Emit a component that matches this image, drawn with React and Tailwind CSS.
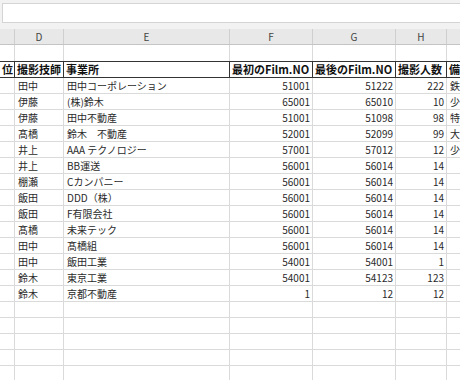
import React from 'react';

const cols = [
  { key: 'c', letter: '', w: 'w-[15px]' },
  { key: 'd', letter: 'D', w: 'w-[49px]' },
  { key: 'e', letter: 'E', w: 'w-[166px]' },
  { key: 'f', letter: 'F', w: 'w-[83px]' },
  { key: 'g', letter: 'G', w: 'w-[83px]' },
  { key: 'h', letter: 'H', w: 'w-[51px]' },
  { key: 'i', letter: '', w: 'w-[60px]' },
];

const rows = [
  ['田中', '田中コーポレーション', '51001', '51222', '222', '鉄道関係'],
  ['伊藤', '(株)鈴木', '65001', '65010', '10', '少年団'],
  ['伊藤', '田中不動産', '51001', '51098', '98', '特別'],
  ['髙橋', '鈴木　不動産', '52001', '52099', '99', '大会'],
  ['井上', 'AAA テクノロジー', '57001', '57012', '12', '少年団'],
  ['井上', 'BB運送', '56001', '56014', '14', ''],
  ['棚瀬', 'Cカンパニー', '56001', '56014', '14', ''],
  ['飯田', 'DDD（株）', '56001', '56014', '14', ''],
  ['飯田', 'F有限会社', '56001', '56014', '14', ''],
  ['髙橋', '未来テック', '56001', '56014', '14', ''],
  ['田中', '髙橋組', '56001', '56014', '14', ''],
  ['田中', '飯田工業', '54001', '54001', '1', ''],
  ['鈴木', '東京工業', '54001', '54123', '123', ''],
  ['鈴木', '京都不動産', '1', '12', '12', ''],
];

const headers = ['位', '撮影技師', '事業所', '最初のFilm.NO', '最後のFilm.NO', '撮影人数', '備考'];

const font = { fontFamily: '"Noto Sans CJK JP", "Noto Sans", sans-serif' };

const DataRow = ({ cells }) => (
  <div className="flex h-[16px] shrink-0">
    {cols.map((c, i) => {
      const v = cells ? (i === 0 ? '' : cells[i - 1]) : '';
      const num = i >= 3 && i <= 5;
      return (
        <div
          key={c.key}
          className={`${c.w} shrink-0 border-r border-b border-[#dadada] overflow-hidden whitespace-nowrap text-[10px] leading-[15px] text-[#2a2a2a] ${num ? 'text-right pr-[2px]' : 'pl-[3px]'}`}
        >
          {v}
        </div>
      );
    })}
  </div>
);

export default function App() {
  return (
    <div className="w-[460px] h-[380px] overflow-hidden bg-white flex flex-col" style={font}>
      {/* formula bar */}
      <div className="h-[29px] shrink-0 bg-[#f2f2f2] pt-[3px] pl-[2px]">
        <div className="h-[20px] bg-white border border-[#d4d4d4] border-r-0" />
      </div>

      {/* column letters */}
      <div className="flex h-[16px] shrink-0 bg-[#e8e8e8] border-b border-[#c4c4c4]">
        {cols.map((c) => (
          <div
            key={c.key}
            className={`${c.w} shrink-0 border-r border-[#cfcfcf] text-center text-[10px] leading-[15px] text-[#444]`}
          >
            {c.letter}
          </div>
        ))}
      </div>

      {/* empty row above header */}
      <div className="flex h-[16px] shrink-0">
        {cols.map((c) => (
          <div key={c.key} className={`${c.w} shrink-0 border-r border-[#dadada]`} />
        ))}
      </div>

      {/* header row */}
      <div className="flex h-[17px] shrink-0 border-t border-b border-[#333]">
        {cols.map((c, i) => (
          <div
            key={c.key}
            className={`${c.w} shrink-0 border-r border-[#333] overflow-hidden whitespace-nowrap font-bold text-[11px] leading-[15px] text-[#111] ${i === 0 ? 'text-right pr-[1px]' : 'pl-[2px]'}`}
          >
            {headers[i]}
          </div>
        ))}
      </div>

      {rows.map((r, i) => (
        <DataRow key={i} cells={r} />
      ))}
      {[0, 1, 2, 3, 4, 5].map((i) => (
        <DataRow key={'e' + i} />
      ))}
    </div>
  );
}
